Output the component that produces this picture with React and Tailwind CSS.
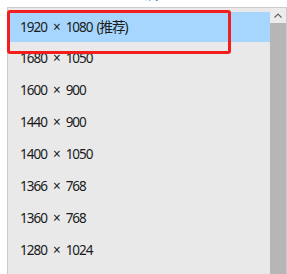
import React from "react";

const modes = [
    ["1680", "1050"],
    ["1600", "900"],
    ["1440", "900"],
    ["1400", "1050"],
    ["1366", "768"],
    ["1360", "768"],
    ["1280", "1024"],
    ["1280", "960"],
];

const Mode = ({ w, h, extra }) => (
    <span className="whitespace-nowrap">
        {w}
        <span className="px-[6px]">×</span>
        {h}
        {extra && <span className="pl-[4px]">{extra}</span>}
    </span>
);

export default function App() {
    return (
        <div
            className="relative w-[287px] h-[274px] bg-white overflow-hidden"
            style={{ fontFamily: '"Noto Sans", "Noto Sans CJK SC", sans-serif' }}
        >
            {/* clipped link above the list */}
            <div className="h-[7px] overflow-hidden pl-[8px]">
                <div className="-mt-[17px] text-[15px] leading-[20px] text-[#0063b1] whitespace-nowrap">
                    Windows HD Color 设置
                </div>
            </div>

            {/* dropdown */}
            <div className="ml-[7px] h-[267px] flex border-t border-l border-r border-[#cccccc] bg-[#e9e9e9]">
                <div className="flex-1 pt-[4px] text-[13.5px] tracking-[-1px] text-[#1b1b1b]">
                    <div className="h-[30px] flex items-center pl-[12px] bg-[#a6d6fd]">
                        <Mode w="1920" h="1080" extra="(推荐)" />
                    </div>
                    {modes.map(([w, h]) => (
                        <div key={w + h} className="h-[32px] flex items-center pl-[12px]">
                            <Mode w={w} h={h} />
                        </div>
                    ))}
                </div>

                {/* scrollbar */}
                <div className="w-[16px] flex flex-col">
                    <div className="h-[15px] flex items-center justify-center bg-[#ececec]">
                        <svg width="8" height="5" viewBox="0 0 8 5" fill="none">
                            <path d="M0.5 4.5 L4 1 L7.5 4.5" stroke="#606060" strokeWidth="1.1" />
                        </svg>
                    </div>
                    <div className="flex-1 bg-[#b6b6b6]" />
                </div>
            </div>

            {/* red highlight frame */}
            <div className="absolute left-[7px] top-[10px] w-[224px] h-[44px] border-[3px] border-[#f21d1d] rounded-[3px]" />
        </div>
    );
}
